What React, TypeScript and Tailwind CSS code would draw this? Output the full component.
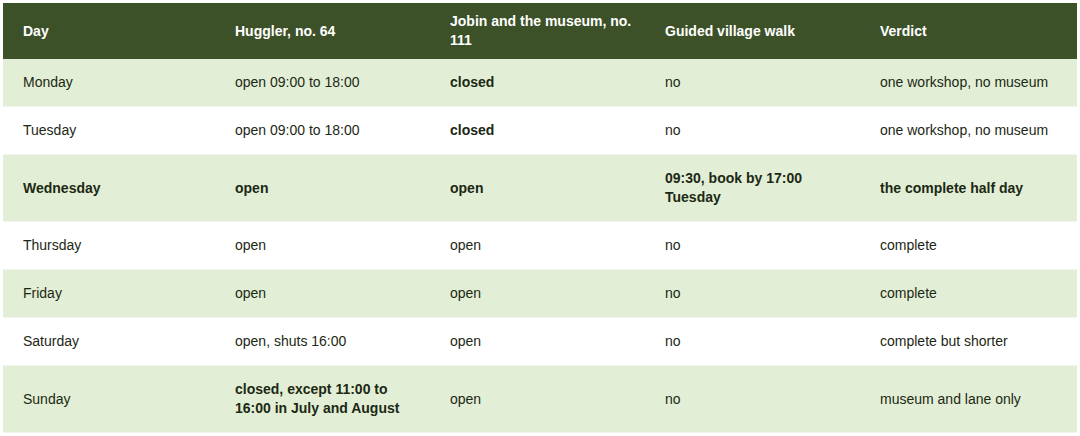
import React from "react";

type Row = { cells: string[]; bold: boolean[]; green: boolean };

const rows: Row[] = [
  { cells: ["Monday", "open 09:00 to 18:00", "closed", "no", "one workshop, no museum"], bold: [false, false, true, false, false], green: true },
  { cells: ["Tuesday", "open 09:00 to 18:00", "closed", "no", "one workshop, no museum"], bold: [false, false, true, false, false], green: false },
  { cells: ["Wednesday", "open", "open", "09:30, book by 17:00 Tuesday", "the complete half day"], bold: [true, true, true, true, true], green: true },
  { cells: ["Thursday", "open", "open", "no", "complete"], bold: [false, false, false, false, false], green: false },
  { cells: ["Friday", "open", "open", "no", "complete"], bold: [false, false, false, false, false], green: true },
  { cells: ["Saturday", "open, shuts 16:00", "open", "no", "complete but shorter"], bold: [false, false, false, false, false], green: false },
  { cells: ["Sunday", "closed, except 11:00 to 16:00 in July and August", "open", "no", "museum and lane only"], bold: [false, true, false, false, false], green: true },
];

const headers = ["Day", "Huggler, no. 64", "Jobin and the museum, no. 111", "Guided village walk", "Verdict"];

export default function App() {
  return (
    <div className="w-[1080px] h-[436px] bg-white p-[3px]" style={{ fontFamily: '"Helvetica Neue", "Liberation Sans", Arial, sans-serif' }}>
      <table className="w-[1074px] table-fixed border-collapse text-[14px] leading-[19px] text-[#1c2814]">
        <colgroup>
          <col className="w-[212px]" />
          <col className="w-[215px]" />
          <col className="w-[215px]" />
          <col className="w-[215px]" />
          <col className="w-[217px]" />
        </colgroup>
        <thead>
          <tr className="bg-[#3d5129] text-white">
            {headers.map((h, i) => (
              <th key={i} className="text-left font-bold align-middle pl-[20px] pr-[10px] py-[9px] h-[56px]">{h}</th>
            ))}
          </tr>
        </thead>
        <tbody>
          {rows.map((r, ri) => (
            <tr key={ri} className={r.green ? "bg-[#e2efd6]" : "bg-white"}>
              {r.cells.map((c, ci) => (
                <td
                  key={ci}
                  className={`pl-[20px] pr-[14px] py-[14px] align-middle border-b border-[#f1f5ec] ${r.bold[ci] ? "font-bold" : "font-normal"}`}
                >
                  {c}
                </td>
              ))}
            </tr>
          ))}
        </tbody>
      </table>
    </div>
  );
}
